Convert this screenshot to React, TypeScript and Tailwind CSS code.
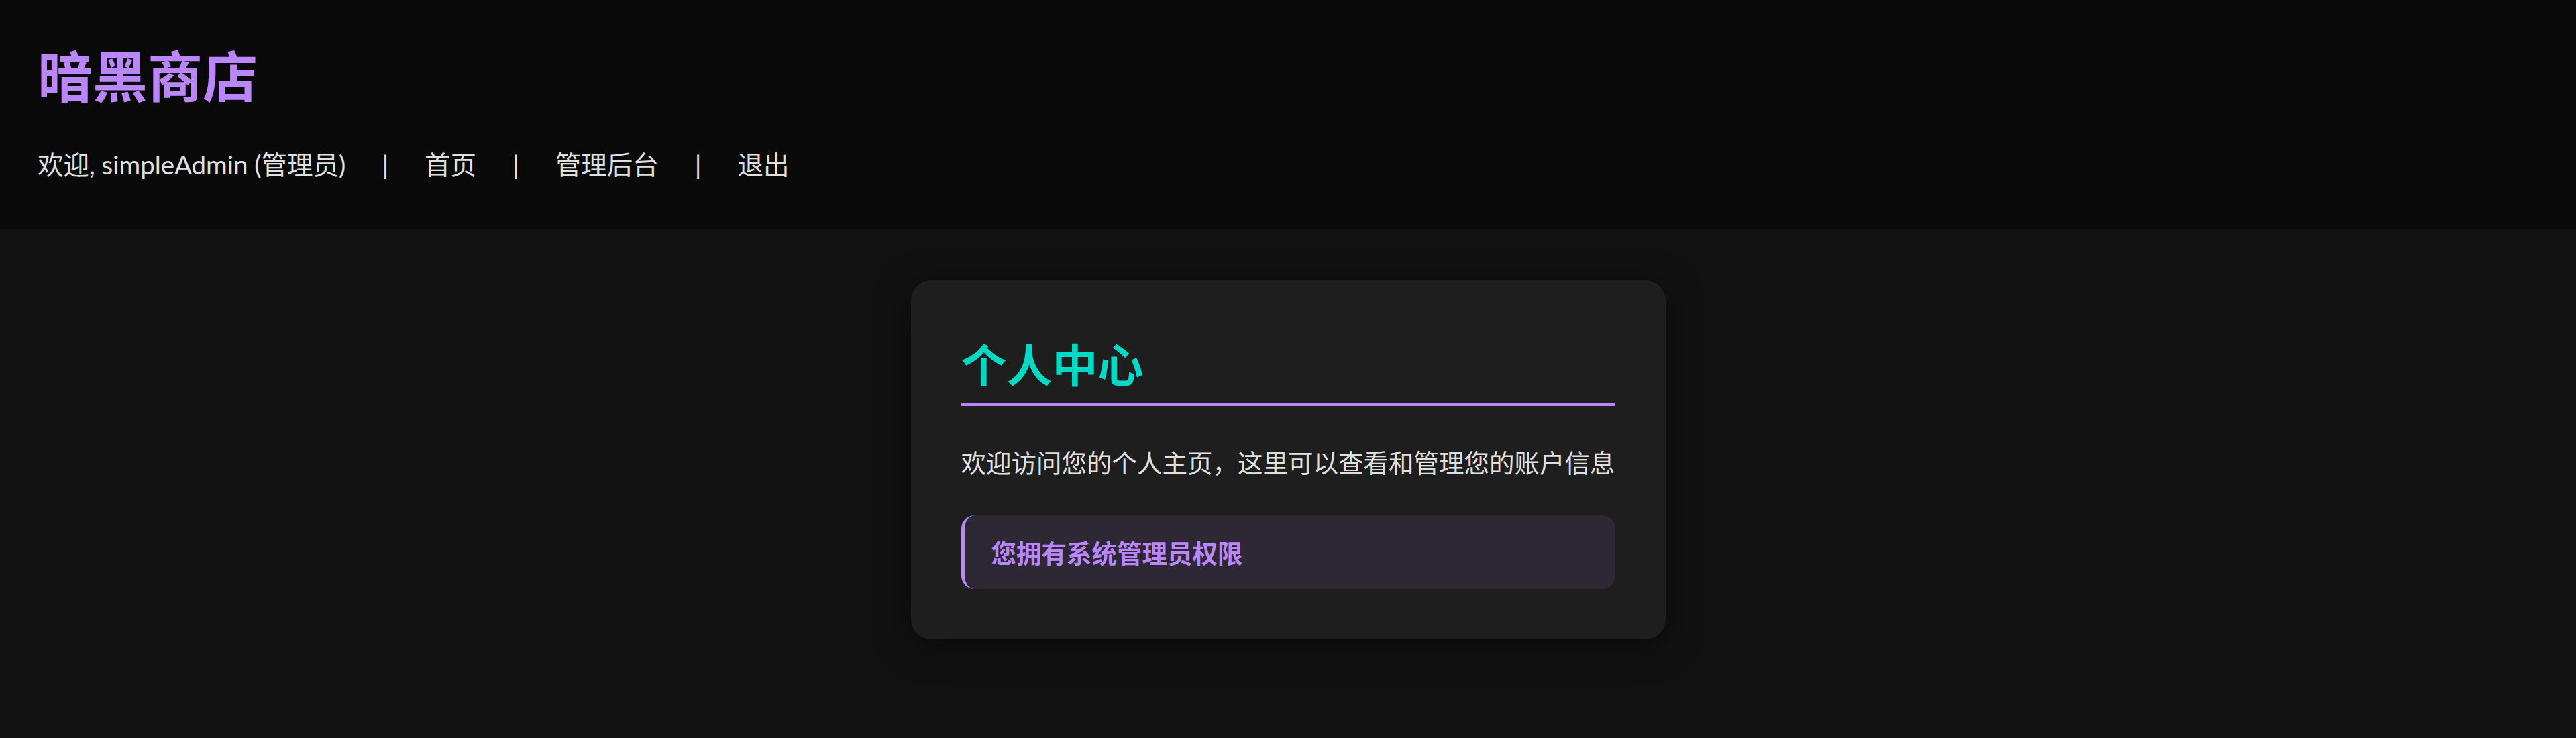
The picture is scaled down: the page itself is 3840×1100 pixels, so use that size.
const font = "font-['Lato','Noto_Sans_CJK_SC',sans-serif]"

function Header() {
  return (
    <header className="bg-[#0a0a0a] px-[56px] pt-[61px] pb-[67px]">
      <h1 className="font-['Noto_Sans_CJK_SC',sans-serif] text-[82px] leading-[98px] font-bold text-[#bb86fc]">暗黑商店</h1>
      <nav className="mt-[56px] flex items-center gap-[54px] text-[38.5px] leading-[60px] text-[#e0e0e0]">
        <span>欢迎, simpleAdmin (管理员)</span>
        <span>|</span>
        <a href="#">首页</a>
        <span>|</span>
        <a href="#">管理后台</a>
        <span>|</span>
        <a href="#">退出</a>
      </nav>
    </header>
  )
}

function ProfileCard() {
  return (
    <section className="mx-auto mt-[76px] w-[1125px] rounded-[30px] bg-[#1e1e1e] p-[75px] shadow-[0_10px_50px_rgba(0,0,0,0.5)]">
      <h2 className="border-b-[5px] border-[#bb86fc] pb-[11px] font-['Noto_Sans_CJK_SC',sans-serif] text-[68px] leading-[96px] font-bold text-[#03dac6]">
        个人中心
      </h2>
      <p className="mt-[54px] whitespace-nowrap font-['Noto_Sans_CJK_SC',sans-serif] text-[37.5px] leading-[58px] text-[#e0e0e0]">
        欢迎访问您的个人主页，这里可以查看和管理您的账户信息
      </p>
      <div className="mt-[51px] rounded-[20px] border-l-[5px] border-[#bb86fc] bg-[#2e2834] py-[27px] pl-[40px]">
        <span className="font-['Noto_Sans_CJK_SC',sans-serif] text-[37.5px] leading-[56px] font-bold text-[#bb86fc]">
          您拥有系统管理员权限
        </span>
      </div>
    </section>
  )
}

export default function App() {
  return (
    <div className={`${font} min-h-screen bg-[#121212]`}>
      <Header />
      <ProfileCard />
    </div>
  )
}
